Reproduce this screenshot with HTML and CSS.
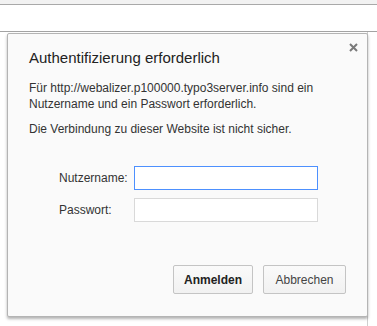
FILE: index.html
```html
<!DOCTYPE html>
<html lang="de">
<head>
<meta charset="UTF-8">
<title>Authentifizierung erforderlich</title>
<meta name="viewport" content="width=device-width, initial-scale=1.0">
<link rel="stylesheet" href="styles.css">
</head>
<body>

<!-- BROWSER CHROME -->
<div class="tabstrip"></div>
<div class="omnibox"></div>

<div class="viewport">

<!-- LOGIN DIALOG -->
<div class="dialog">
    <div class="dialog-head">
        <div class="title">Authentifizierung erforderlich</div>
        <svg class="close" width="9" height="9" viewBox="0 0 9 9">
            <path d="M1 1 L8 8 M8 1 L1 8" stroke="#7a7a7a" stroke-width="2"/>
        </svg>
    </div>

    <p class="text first">Für http://webalizer.p100000.typo3server.info sind ein<br>Nutzername und ein Passwort erforderlich.</p>
    <p class="text">Die Verbindung zu dieser Website ist nicht sicher.</p>

    <div class="form">
        <label for="user">Nutzername:</label>
        <input id="user" type="text" class="focus">
        <label for="pass">Passwort:</label>
        <input id="pass" type="password">
    </div>

    <div class="actions">
        <button class="primary">Anmelden</button>
        <button class="cancel">Abbrechen</button>
    </div>
</div>

</div>

</body>
</html>
```

FILE: styles.css
```css
body {
    margin: 0;
    font-family: "Liberation Sans", Arial, sans-serif;
    background: #ffffff;
    color: #333;
}

/* CHROME */
.tabstrip {
    height: 4px;
    background: #f2f2f2;
    border-bottom: 1px solid #a9a9a9;
}

.omnibox {
    height: 26px;
    background: #ffffff;
    border-bottom: 1px solid #a3a3a3;
}

.viewport {
    width: 368px;
    height: 294px;
    padding: 1px 0 0 7px;
    box-sizing: border-box;
    border-right: 1px solid #cfcfcf;
}

/* DIALOG */
.dialog {
    width: 361px;
    height: 284px;
    box-sizing: border-box;
    padding: 9px 9px 21px 21px;
    background: #fafafa;
    border: 1px solid #b4b4b4;
    border-radius: 2px;
    box-shadow: 0 2px 3px rgba(0,0,0,0.3);
    display: flex;
    flex-direction: column;
}

.dialog-head {
    display: flex;
    justify-content: space-between;
    align-items: flex-start;
}

.title {
    margin-top: 5px;
    font-size: 15px;
    line-height: 20px;
    color: #222;
}

.close {
    display: block;
}

.text {
    margin: 9px 0 0;
    font-size: 12px;
    line-height: 16px;
    color: #333;
}

.text.first {
    margin-top: 12px;
}

/* FORM */
.form {
    margin: 29px 0 0 30px;
    display: grid;
    grid-template-columns: 75px 184px;
    row-gap: 8px;
    align-items: center;
}

.form label {
    font-size: 12px;
    color: #333;
}

.form input {
    width: 184px;
    height: 24px;
    box-sizing: border-box;
    border: 1px solid #d9d9d9;
    background: #fff;
    outline: none;
}

.form input.focus {
    border-color: #4d90fe;
}

/* BUTTONS */
.actions {
    margin: auto 12px 1px 0;
    display: flex;
    justify-content: flex-end;
    gap: 10px;
}

.actions button {
    width: 80px;
    height: 29px;
    padding: 0;
    font-family: inherit;
    font-size: 12px;
    color: #444;
    background: linear-gradient(#fafafa, #f1f1f1);
    border: 1px solid #c4c4c4;
    border-radius: 2px;
}

.actions button.primary {
    font-weight: bold;
    color: #222;
}

.actions button.cancel {
    width: 83px;
}
```
